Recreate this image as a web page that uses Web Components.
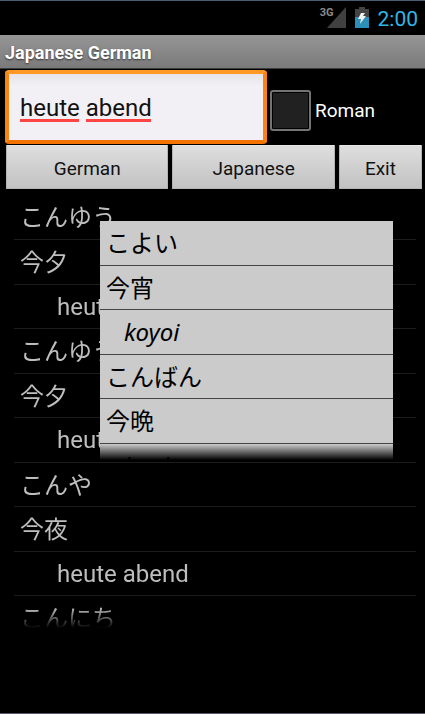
<!DOCTYPE html>
<html lang="en">
<head>
<meta charset="utf-8">
<meta name="viewport" content="width=device-width, initial-scale=1">
<title>Japanese German</title>
<style>
  html, body {
    margin: 0;
    height: 100%;
    background: #000;
  }
  body {
    font-family: Roboto, "Noto Sans CJK JP", sans-serif;
    color: #bebebe;
  }
</style>
</head>
<body>

<dict-app>
  <status-bar slot="status" time="2:00"></status-bar>
  <title-bar slot="title">Japanese German</title-bar>
  <search-panel slot="search" value="heute abend"></search-panel>
  <entry-list slot="entries">
    <entry-row lang="ja">こんゆう</entry-row>
    <entry-row lang="ja">今夕</entry-row>
    <entry-row kind="meaning">heute abend</entry-row>
    <entry-row lang="ja">こんゆう</entry-row>
    <entry-row lang="ja">今夕</entry-row>
    <entry-row kind="meaning">heute abend</entry-row>
    <entry-row lang="ja">こんや</entry-row>
    <entry-row lang="ja">今夜</entry-row>
    <entry-row kind="meaning">heute abend</entry-row>
    <entry-row lang="ja">こんにち</entry-row>
  </entry-list>
  <toast-list slot="toast">
    <entry-row kind="toast" lang="ja">こよい</entry-row>
    <entry-row kind="toast" lang="ja">今宵</entry-row>
    <entry-row kind="romaji">koyoi</entry-row>
    <entry-row kind="toast" lang="ja">こんばん</entry-row>
    <entry-row kind="toast" lang="ja">今晩</entry-row>
    <entry-row kind="romaji">konban</entry-row>
  </toast-list>
</dict-app>

<script>
/**
 * DictApp - page frame, stacks the bars and the results
 */
class DictApp extends HTMLElement {
  constructor() {
    super();
    this.attachShadow({ mode: 'open' });
    this.shadowRoot.innerHTML = `
      <style>
        :host {
          display: flex;
          flex-direction: column;
          box-sizing: border-box;
          height: 100vh;
          border-top: 1px solid #4a5d70;
          border-bottom: 1px solid #56566a;
          background: #000;
        }
        main {
          position: relative;
          flex: 1;
          min-height: 0;
          display: flex;
          flex-direction: column;
          padding: 5px 9px 85px 14px;
        }
        ::slotted([slot="entries"]) {
          flex: 1;
          min-height: 0;
        }
        /* Popup lies over the results */
        ::slotted([slot="toast"]) {
          position: absolute;
          top: 32px;
          left: 100px;
          right: 32px;
        }
      </style>
      <slot name="status"></slot>
      <slot name="title"></slot>
      <slot name="search"></slot>
      <main>
        <slot name="entries"></slot>
        <slot name="toast"></slot>
      </main>
    `;
  }
}

/**
 * StatusBar - signal, battery and clock
 */
class StatusBar extends HTMLElement {
  constructor() {
    super();
    this.attachShadow({ mode: 'open' });
  }

  connectedCallback() {
    this.shadowRoot.innerHTML = `
      <style>
        :host {
          display: flex;
          align-items: center;
          justify-content: flex-end;
          height: 34px;
          padding-right: 7px;
          color: #33b5e5;
          font-size: 21px;
        }
        .network {
          align-self: flex-start;
          margin-top: 6px;
          color: #8a8a8a;
          font-size: 11px;
          font-weight: 700;
          line-height: 12px;
        }
        .signal {
          margin-left: -7px;
        }
        .battery {
          margin: 0 9px;
        }
        svg {
          padding-bottom: 2px;
        }
        time {
          padding-top: 2px;
        }
      </style>
      <span class="network">3G</span>
      <svg class="signal" width="19" height="21" viewBox="0 0 19 21" aria-hidden="true">
        <path d="M19 0V21H0Z" fill="#404040"/>
      </svg>
      <svg class="battery" width="14" height="21" viewBox="0 0 14 21" aria-hidden="true">
        <path d="M4 0H10V2H14V10H0V2H4Z" fill="#444"/>
        <path d="M0 10H14V21H0Z" fill="#2b8fb8"/>
        <path d="M6 6H10L8 9H11L5 17L6 12H3Z" fill="#f2f2f2"/>
      </svg>
      <time>${this.getAttribute('time') || ''}</time>
    `;
  }
}

/**
 * TitleBar - grey strip with the app name
 */
class TitleBar extends HTMLElement {
  constructor() {
    super();
    this.attachShadow({ mode: 'open' });
    this.shadowRoot.innerHTML = `
      <style>
        :host {
          display: flex;
          align-items: center;
          box-sizing: border-box;
          height: 34px;
          padding: 2px 5px 0;
          border-bottom: 1px solid #3c3c3c;
          background: linear-gradient(#969696, #7a7a7a);
          color: #fff;
          text-shadow: 0 1px 2px rgba(0, 0, 0, 0.6);
        }
        h1 {
          margin: 0;
          font-size: 18px;
          font-weight: 700;
        }
      </style>
      <h1><slot></slot></h1>
    `;
  }
}

/**
 * SearchPanel - query box, Roman switch and the three buttons
 */
class SearchPanel extends HTMLElement {
  constructor() {
    super();
    this.attachShadow({ mode: 'open' });
  }

  connectedCallback() {
    this.shadowRoot.innerHTML = `
      <style>
        :host {
          display: block;
          padding: 1px 3px 0 5px;
        }
        .query {
          display: flex;
          align-items: center;
          gap: 3px;
        }
        input[type="text"] {
          flex: 1;
          min-width: 0;
          box-sizing: border-box;
          height: 74px;
          margin: 0;
          padding: 2px 11px 0;
          border: 4px solid #f98412;
          border-top-color: #ff9824;
          border-bottom-color: #f47200;
          border-radius: 4px;
          outline: none;
          /* spelling marks under the two words, then the paper */
          background:
            linear-gradient(#f44, #f44) 11px 45px / 59px 3px no-repeat,
            linear-gradient(#f44, #f44) 77px 45px / 65px 3px no-repeat,
            linear-gradient(#e6e4e8, #f3f0f5 12px);
          color: #111;
          font: 24px Roboto, "Noto Sans CJK JP", sans-serif;
        }
        label {
          display: flex;
          align-items: center;
          gap: 4px;
          width: 152px;
          color: #fff;
          font-size: 19px;
        }
        input[type="checkbox"] {
          appearance: none;
          box-sizing: border-box;
          width: 41px;
          height: 41px;
          margin: 6px 0 0;
          border: 2px solid #747474;
          border-radius: 3px;
          background: #202120;
          box-shadow: inset 0 0 0 1px #000;
        }
        label span {
          padding-top: 7px;
        }
        .actions {
          display: flex;
          gap: 4px;
          margin-top: 1px;
          padding-left: 1px;
        }
        button {
          flex: 164 1 0;
          height: 44px;
          margin: 0;
          padding: 2px 0 0;
          border: 1px solid #b4b4b4;
          border-top-color: #e6e6e6;
          border-radius: 1px;
          background: linear-gradient(#dedede, #c2c2c2);
          color: #111;
          font: 19px Roboto, sans-serif;
        }
        button:last-child {
          flex-grow: 83;
        }
      </style>
      <div class="query">
        <input type="text" aria-label="Search" spellcheck="false">
        <label><input type="checkbox"><span>Roman</span></label>
      </div>
      <div class="actions">
        <button type="button">German</button>
        <button type="button">Japanese</button>
        <button type="button">Exit</button>
      </div>
    `;
    this.shadowRoot.querySelector('input').value = this.getAttribute('value') || '';
  }
}

/**
 * EntryList - results, fades out at the lower edge
 */
class EntryList extends HTMLElement {
  constructor() {
    super();
    this.attachShadow({ mode: 'open' });
    this.shadowRoot.innerHTML = `
      <style>
        :host {
          display: block;
          overflow: hidden;
          -webkit-mask-image: linear-gradient(#000 calc(100% - 20px), transparent);
          mask-image: linear-gradient(#000 calc(100% - 20px), transparent);
        }
        ::slotted(entry-row) {
          height: 45px;
        }
        ::slotted(entry-row:nth-child(odd)) {
          height: 44px;
        }
        ::slotted(entry-row:first-child) {
          height: 46px;
        }
      </style>
      <slot></slot>
    `;
  }
}

/**
 * ToastList - light popup with the readings
 */
class ToastList extends HTMLElement {
  constructor() {
    super();
    this.attachShadow({ mode: 'open' });
    this.shadowRoot.innerHTML = `
      <style>
        :host {
          display: block;
          height: 239px;
          overflow: hidden;
          background: #cbcbcb;
        }
        :host::after {
          content: "";
          position: absolute;
          inset: auto 0 0;
          height: 16px;
          background: linear-gradient(transparent, #000);
        }
        ::slotted(entry-row) {
          height: 45px;
        }
        ::slotted(entry-row:nth-child(even)) {
          height: 44px;
        }
      </style>
      <slot></slot>
    `;
  }
}

/**
 * EntryRow - one line; kind is meaning, toast or romaji
 */
class EntryRow extends HTMLElement {
  constructor() {
    super();
    this.attachShadow({ mode: 'open' });
    this.shadowRoot.innerHTML = `
      <style>
        :host {
          display: flex;
          align-items: center;
          box-sizing: border-box;
          padding: 2px 0 0 6px;
          border-bottom: 1px solid #1c1c1c;
          font-size: 24px;
          line-height: 28px;
          white-space: nowrap;
        }
        :host([kind="meaning"]) {
          padding: 0 0 0 43px;
        }
        :host([kind="toast"]),
        :host([kind="romaji"]) {
          border-bottom-color: #444;
          color: #000;
        }
        :host([kind="romaji"]) {
          padding: 0 0 0 24px;
          font-family: "Noto Sans", sans-serif;
          font-style: italic;
        }
      </style>
      <slot></slot>
    `;
  }
}

customElements.define('dict-app', DictApp);
customElements.define('status-bar', StatusBar);
customElements.define('title-bar', TitleBar);
customElements.define('search-panel', SearchPanel);
customElements.define('entry-list', EntryList);
customElements.define('toast-list', ToastList);
customElements.define('entry-row', EntryRow);
</script>
</body>
</html>
